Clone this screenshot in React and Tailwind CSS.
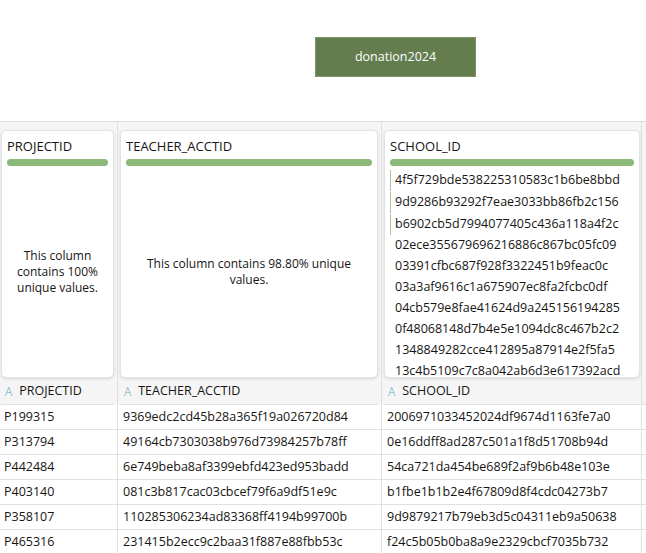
const font = { fontFamily: '"Open Sans", "Noto Sans", sans-serif' }

const schoolSample = [
  '4f5f729bde538225310583c1b6be8bbd',
  '9d9286b93292f7eae3033bb86fb2c156',
  'b6902cb5d7994077405c436a118a4f2c',
  '02ece355679696216886c867bc05fc09',
  '03391cfbc687f928f3322451b9feac0c',
  '03a3af9616c1a675907ec8fa2fcbc0df',
  '04cb579e8fae41624d9a245156194285',
  '0f48068148d7b4e5e1094dc8c467b2c2',
  '1348849282cce412895a87914e2f5fa5',
  '13c4b5109c7c8a042ab6d3e617392acd',
]

const rows = [
  ['P199315', '9369edc2cd45b28a365f19a026720d84', '2006971033452024df9674d1163fe7a0'],
  ['P313794', '49164cb7303038b976d73984257b78ff', '0e16ddff8ad287c501a1f8d51708b94d'],
  ['P442484', '6e749beba8af3399ebfd423ed953badd', '54ca721da454be689f2af9b6b48e103e'],
  ['P403140', '081c3b817cac03cbcef79f6a9df51e9c', 'b1fbe1b1b2e4f67809d8f4cdc04273b7'],
  ['P358107', '110285306234ad83368ff4194b99700b', '9d9879217b79eb3d5c04311eb9a50638'],
  ['P465316', '231415b2ecc9c2baa31f887e88fbb53c', 'f24c5b05b0ba8a9e2329cbcf7035b732'],
]

function Card({ title, children }) {
  return (
    <div className="h-[248px] mt-2 mb-[1px] bg-white rounded-[5px] border border-[#e2e2e2] shadow-[0_1px_3px_rgba(0,0,0,0.12)] flex flex-col overflow-hidden">
      <div className="px-[5px] pt-[5px] text-[13px] leading-[20px] text-[#161513] whitespace-nowrap">{title}</div>
      <div className="mx-[5px] mt-[3px] h-[7px] shrink-0 rounded-full bg-[#8cb87a]" />
      {children}
    </div>
  )
}

function Summary({ text }) {
  return (
    <div className="flex-1 flex items-center justify-center px-3 text-center text-[12px] leading-4 text-[#161513]">
      {text}
    </div>
  )
}

function HeaderCell({ label }) {
  return (
    <div className="h-[26px] flex items-center gap-[7px] px-[4px] border-b border-[#e0e0e0] text-[12.5px] text-[#161513]">
      <span className="text-[#6aa6c6] text-[12px] font-light">A</span>
      <span>{label}</span>
    </div>
  )
}

function Column({ width, card, header, values, last }) {
  return (
    <div className={`${width} shrink-0 flex flex-col border-r border-[#e0e0e0]`}>
      <div className={`bg-[#f5f5f5] ${last ? 'pl-[2px] pr-[1px]' : 'pl-[2px] pr-[3px]'}`}>
        {card}
        <HeaderCell label={header} />
      </div>
      {values.map((v, i) => (
        <div key={i} className="h-[25px] flex items-center px-[5px] border-b border-[#e0e0e0] text-[12.5px] text-[#161513] whitespace-nowrap overflow-hidden">
          {v}
        </div>
      ))}
    </div>
  )
}

export default function App() {
  return (
    <div className="w-[646px] h-[553px] bg-white overflow-hidden" style={font}>
      <div className="h-[122px] flex justify-center pt-[37px] pl-[145px] border-b border-[#dcdcdc]">
        <div className="w-[161px] h-[40px] bg-[#637d4f] border border-[#7d9469] flex items-center justify-center text-white text-[12.5px]">
          donation2024
        </div>
      </div>

      <div className="flex">
        <div className="w-[118px] shrink-0 flex flex-col border-r border-[#e0e0e0]">
          <div className="bg-[#f5f5f5] pl-[1px] pr-[3px]">
            <Card title="PROJECTID">
              <Summary text="This column contains 100% unique values." />
            </Card>
            <HeaderCell label="PROJECTID" />
          </div>
          {rows.map((r, i) => (
            <div key={i} className="h-[25px] flex items-center px-[4px] border-b border-[#e0e0e0] text-[12.5px] text-[#161513]">
              {r[0]}
            </div>
          ))}
        </div>

        <Column
          width="w-[264px]"
          header="TEACHER_ACCTID"
          values={rows.map((r) => r[1])}
          card={
            <Card title="TEACHER_ACCTID">
              <Summary text="This column contains 98.80% unique values." />
            </Card>
          }
        />

        <Column
          width="w-[260px]"
          header="SCHOOL_ID"
          last
          values={rows.map((r) => r[2])}
          card={
            <Card title="SCHOOL_ID">
              <div className="mt-[4px] px-[5px] flex flex-col">
                {schoolSample.map((s, i) => (
                  <div
                    key={s}
                    className={`h-[21px] shrink-0 flex items-center pl-[4px] text-[12.5px] text-[#161513] whitespace-nowrap border-l ${
                      i < 3 ? 'border-[#a9c49a]' : 'border-transparent'
                    } ${i < 2 ? 'mb-[1px]' : ''}`}
                  >
                    {s}
                  </div>
                ))}
              </div>
            </Card>
          }
        />

        <div className="flex-1 flex flex-col">
          <div className="bg-[#f5f5f5] h-[283px] border-b border-[#e0e0e0]" />
          {rows.map((r, i) => (
            <div key={i} className="h-[25px] border-b border-[#e0e0e0]" />
          ))}
        </div>
      </div>
    </div>
  )
}
